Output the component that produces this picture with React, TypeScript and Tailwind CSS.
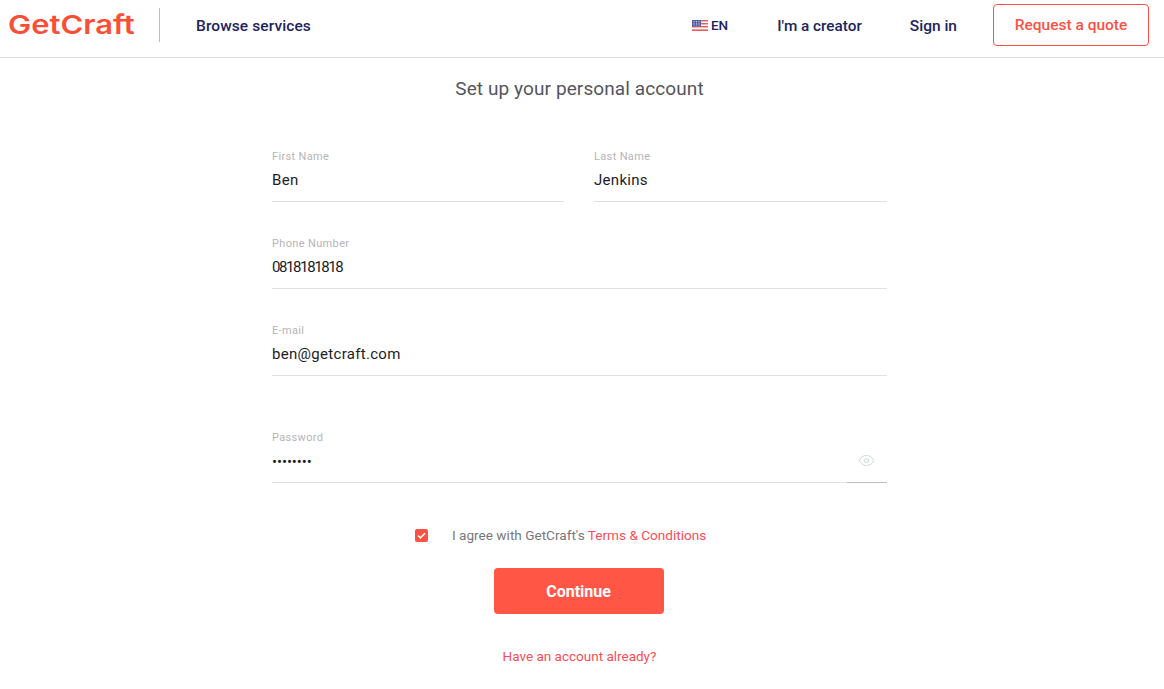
import React from "react";
import { Eye } from "lucide-react";

const font = "font-['Roboto','Liberation_Sans',sans-serif]";

function Field({
  label,
  value,
  type = "text",
  className = "",
  inputClassName = "tracking-[0.3px]",
}: {
  label: string;
  value: string;
  type?: string;
  className?: string;
  inputClassName?: string;
}) {
  return (
    <label className={`block h-[87px] ${className}`}>
      <span className="block h-[13px] text-[11px] leading-[13px] text-[#b5b5b8] tracking-[0.35px]">{label}</span>
      <input
        readOnly
        type={type}
        value={value}
        className={`block w-full h-[35px] pb-[9px] mt-[4px] text-[15px] leading-[22px] text-[#1c1c28] outline-none border-b border-[#e0e0e0] ${inputClassName}`}
      />
    </label>
  );
}

function Flag() {
  return (
    <svg width="16" height="11" viewBox="0 0 16 11" aria-hidden="true">
      <rect width="16" height="11" fill="#f4f4f6" />
      <rect y="0" width="16" height="1.4" fill="#e0605c" />
      <rect y="3" width="16" height="1.4" fill="#e0605c" />
      <rect y="6" width="16" height="1.4" fill="#e0605c" />
      <rect y="9.4" width="16" height="1.6" fill="#e0605c" />
      <rect width="9" height="6.4" fill="#5560a8" />
      <path d="M1.5 1.5h1M4 1.5h1M6.5 1.5h1M1.5 3.2h1M4 3.2h1M6.5 3.2h1M1.5 4.9h1M4 4.9h1M6.5 4.9h1" stroke="#e6e8f4" strokeWidth="0.8" />
    </svg>
  );
}

export default function App() {
  return (
    <div className={`${font} w-full min-h-[689px] bg-white overflow-hidden`}>
      <header className="h-[58px] border-b border-[#dfdfdf] flex items-center pl-[8px] pr-[15px] pb-[7px]">
        <div className="text-[26px] leading-none font-semibold text-[#fa4f36] w-[125px] font-['Inter',sans-serif] whitespace-nowrap origin-left scale-x-[1.19]">GetCraft</div>
        <div className="w-px h-[34px] bg-[#bdbdbd] ml-[26px]" />
        <a className="ml-[36px] pt-[3px] text-[15.5px] tracking-[0.1px] font-medium text-[#21245c]">Browse services</a>
        <div className="ml-auto flex items-center">
          <div className="flex items-center gap-[3px] pt-[1px] text-[13.5px] font-medium text-[#21245c]">
            <Flag />
            <span>EN</span>
          </div>
          <a className="ml-[49px] pt-[3px] text-[15.3px] font-medium text-[#21245c]">I'm a creator</a>
          <a className="ml-[48px] pt-[3px] text-[15.5px] font-medium text-[#21245c]">Sign in</a>
          <button className="ml-[36px] w-[156px] h-[42px] pt-[2px] rounded-[4px] border border-[#fa5244] text-[15.5px] font-medium text-[#fa5244]">
            Request a quote
          </button>
        </div>
      </header>

      <main className="w-[1159px] flex flex-col items-center">
        <h1 className="mt-[18px] h-[25px] text-[19px] leading-[25px] font-normal text-[#55555c] tracking-[0.1px]">Set up your personal account</h1>

        <form className="w-[615px] mt-[49px]">
          <div className="grid grid-cols-[292px_293px] gap-x-[30px]">
            <Field label="First Name" value="Ben" />
            <Field label="Last Name" value="Jenkins" />
          </div>
          <Field label="Phone Number" value="0818181818" inputClassName="tracking-[-1.4px]" />
          <Field label="E-mail" value="ben@getcraft.com" className="h-[107px]" />
          <div className="relative">
            <Field label="Password" value="••••••••" className="h-auto" inputClassName="tracking-[-0.1px] pt-[2px]" />
            <Eye className="absolute right-[12px] top-[21px] text-[#c9d0d4]" size={17} strokeWidth={1.25} />
            <div className="absolute right-0 bottom-0 w-[40px] h-px bg-[#b5bcd6]" />
          </div>
        </form>

        <div className="mt-[43px] w-[615px] pl-[143px] flex items-center h-[18px] text-[13.6px] text-[#77777d]">
          <span className="w-[13px] h-[13px] rounded-[2px] bg-[#fa5244] flex items-center justify-center">
            <svg width="9" height="7" viewBox="0 0 9 7" fill="none" aria-hidden="true">
              <path d="M1 3.5 3.4 5.8 8 1.2" stroke="#fff" strokeWidth="1.6" />
            </svg>
          </span>
          <span className="ml-[24px]">
            I agree with GetCraft's <a className="text-[#fa4d56]">Terms &amp; Conditions</a>
          </span>
        </div>

        <button className="mt-[24px] mr-[2px] w-[170px] h-[46px] pt-[1px] rounded-[4px] bg-[#ff5645] text-white text-[16px] font-bold">Continue</button>

        <a className="mt-[33px] text-[13.5px] leading-[18px] text-[#fa4d56]">Have an account already?</a>
      </main>
    </div>
  );
}
